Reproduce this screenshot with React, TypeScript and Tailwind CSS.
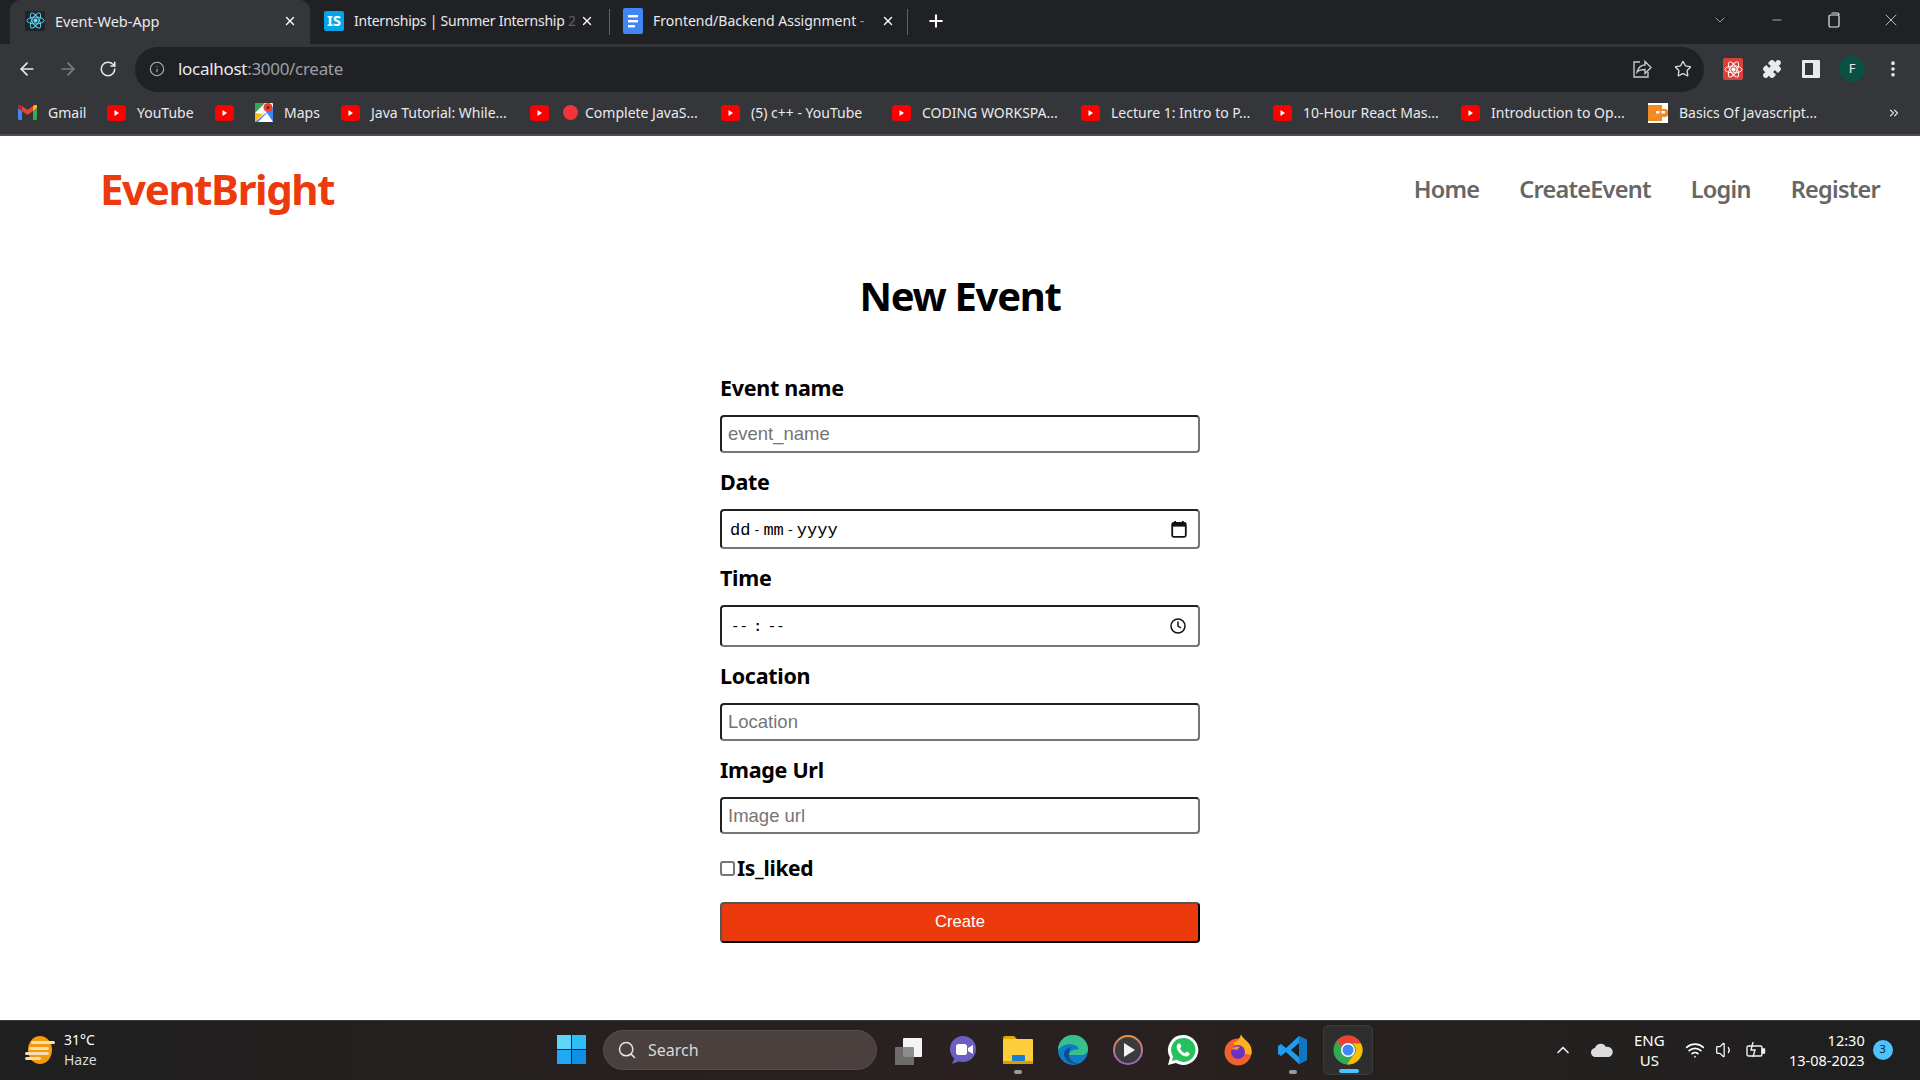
import React from "react";
import { ArrowLeft, ArrowRight, RotateCw, Info, Star, Puzzle, EllipsisVertical, ChevronDown, ChevronUp, Minus, X, Plus, Search, Wifi, Volume1, ChevronsRight } from "lucide-react";

const ui = "font-['Noto_Sans','Open_Sans',sans-serif]";

function Yt() {
  return (
    <svg width="19" height="16" viewBox="0 0 19 16" className="shrink-0">
      <rect x="0" y="0" width="19" height="16" rx="4" fill="#ff0000" />
      <path d="M7.5 5 L12 8 L7.5 11 Z" fill="#fff" />
    </svg>
  );
}
function Gmail() {
  return (
    <svg width="19" height="15" viewBox="0 0 19 15" className="shrink-0">
      <path d="M0 3v10.5A1.5 1.5 0 0 0 1.5 15H4V6z" fill="#4285f4" />
      <path d="M15 6v9h2.5a1.5 1.5 0 0 0 1.5-1.5V3z" fill="#34a853" />
      <path d="M4 6l5.5 4L15 6V1L9.5 5 4 1z" fill="#ea4335" />
      <path d="M0 3l4 3V1L2.5 0A1.5 1.5 0 0 0 0 1.5z" fill="#c5221f" />
      <path d="M15 1v5l4-3V1.5A1.5 1.5 0 0 0 16.5 0z" fill="#fbbc04" />
    </svg>
  );
}
function Maps() {
  return (
    <svg width="18" height="19" viewBox="0 0 18 19" className="shrink-0">
      <rect width="18" height="19" rx="1" fill="#fff" />
      <path d="M0 19V10l8 1-8 8z" fill="#fbbc04" />
      <path d="M0 19L18 4v15z" fill="#4285f4" />
      <path d="M0 0h10L0 10z" fill="#34a853" />
      <path d="M3 19l9-9 6 9z" fill="#fff" />
      <circle cx="13" cy="4.5" r="4.5" fill="#ea4335" />
      <circle cx="13" cy="4.5" r="1.6" fill="#8f1b12" />
    </svg>
  );
}
function Basics() {
  return (
    <svg width="20" height="20" viewBox="0 0 20 20" className="shrink-0">
      <rect width="20" height="20" fill="#fff" />
      <path d="M0 2h14v4H5v8h9v4H0z" fill="#f08a24" />
      <rect x="4" y="6" width="16" height="8" rx="3" fill="#f08a24" />
      <rect x="8" y="8" width="3.5" height="2.5" fill="#fff" />
      <rect x="13.5" y="8" width="3.5" height="2.5" fill="#fff" />
    </svg>
  );
}
function Atom({ size = 20, color = "#61dafb" }: { size?: number; color?: string }) {
  return (
    <svg width={size} height={size} viewBox="0 0 20 20" fill="none" stroke={color} strokeWidth="1">
      <ellipse cx="10" cy="10" rx="9" ry="3.6" />
      <ellipse cx="10" cy="10" rx="9" ry="3.6" transform="rotate(60 10 10)" />
      <ellipse cx="10" cy="10" rx="9" ry="3.6" transform="rotate(120 10 10)" />
      <circle cx="10" cy="10" r="1.8" fill={color} />
    </svg>
  );
}
function Docs() {
  return (
    <svg width="20" height="26" viewBox="0 0 20 26">
      <rect width="20" height="26" rx="2" fill="#4285f4" />
      <rect x="5" y="7" width="10" height="2.4" fill="#fff" />
      <rect x="5" y="12" width="10" height="2.4" fill="#fff" />
      <rect x="5" y="17" width="7" height="2.4" fill="#fff" />
    </svg>
  );
}
function Bookmark({ w, icon, text, tight }: { w: string; icon: React.ReactNode; text?: string; tight?: boolean }) {
  return (
    <div className={`${w} flex items-center ${tight ? "gap-[7px]" : "gap-[11px]"} shrink-0`}>
      {icon}
      {text && <span className="text-[14px] leading-[20px] text-[#e8eaed] whitespace-nowrap">{text}</span>}
    </div>
  );
}

function Field({ label, children }: { label: string; children: React.ReactNode }) {
  return (
    <>
      <label className={`${ui} block h-[28px] leading-[28px] mt-[15px] mb-[13px] text-[21.5px] font-bold text-black tracking-[-0.3px]`}>{label}</label>
      {children}
    </>
  );
}
const box = "w-full border-2 border-[#767676] border-t-[#212121] border-l-[#212121] rounded-[4px] bg-white";
const inp = `${box} block px-[6px] font-['Liberation_Sans',sans-serif] text-[18.5px] placeholder:text-[#757575] outline-none`;

function Calendar() {
  return (
    <svg width="16" height="18" viewBox="0 0 16 18" fill="none">
      <rect x="1.2" y="3" width="13.6" height="13.8" rx="1.5" stroke="#111" strokeWidth="1.8" />
      <rect x="1" y="3" width="14" height="3.6" fill="#111" />
      <rect x="3.2" y="1" width="1.8" height="3" fill="#111" />
      <rect x="11" y="1" width="1.8" height="3" fill="#111" />
    </svg>
  );
}
function Clock() {
  return (
    <svg width="16" height="16" viewBox="0 0 16 16" fill="none" stroke="#111" strokeWidth="1.5">
      <circle cx="8" cy="8" r="7" />
      <path d="M8 3.6V8l3 2" />
    </svg>
  );
}

function Tile({ children, dot, className = "" }: { children: React.ReactNode; dot?: boolean; className?: string }) {
  return (
    <div className={`relative w-[50px] h-[50px] mx-[2.5px] flex items-center justify-center rounded-[5px] ${className}`}>
      {children}
      {dot && <span className="absolute bottom-[1px] left-[21px] w-[8px] h-[4px] rounded-full bg-[#9a9a9a]" />}
    </div>
  );
}

export default function App() {
  return (
    <div className={`${ui} w-[1920px] h-[1080px] overflow-hidden flex flex-col bg-white`}>
      {/* tab strip */}
      <div className="h-[44px] shrink-0 bg-[#202124] flex items-end pl-[10px] text-[#e8eaed]">
        <div className="w-[300px] h-[44px] pb-[3px] bg-[#35363a] rounded-t-[10px] flex items-center pl-[15px] pr-[13px]">
          <div className="w-[20px] h-[20px] bg-[#20232a] rounded-[2px] flex items-center justify-center shrink-0"><Atom size={19} /></div>
          <span className="ml-[10px] text-[14.5px] leading-[20px] flex-1">Event-Web-App</span>
          <X size={14} strokeWidth={2.4} className="text-white" />
        </div>
        <div className="w-[299px] h-[44px] pb-[3px] flex items-center pl-[14px] pr-[15px]">
          <div className="w-[20px] h-[20px] bg-[#00a5ec] rounded-[2px] flex items-center justify-center text-white text-[15px] font-bold shrink-0 leading-none">IS</div>
          <span className="ml-[10px] text-[14px] leading-[20px] whitespace-nowrap tracking-[-0.25px]">Internships | Summer Internship <span className="opacity-30">2</span></span>
          <X size={14} strokeWidth={2.4} className="ml-auto text-white" />
        </div>
        <div className="w-px h-[26px] bg-[#5f6368] mb-[9px]" />
        <div className="w-[297px] h-[44px] pb-[3px] flex items-center pl-[13px] pr-[12px]">
          <Docs />
          <span className="ml-[10px] text-[14px] leading-[20px] whitespace-nowrap">Frontend/Backend Assignment <span className="opacity-60">-</span></span>
          <X size={14} strokeWidth={2.4} className="ml-auto text-white" />
        </div>
        <div className="w-px h-[26px] bg-[#5f6368] mb-[9px]" />
        <Plus size={20} strokeWidth={2.4} className="ml-[18px] mb-[13px] text-white" />
        <div className="ml-auto h-[44px] pb-[5px] flex items-center text-[#dadce0]">
          <ChevronDown size={16} strokeWidth={1} className="mr-[42px]" />
          <Minus size={14} strokeWidth={1.2} className="mr-[43px]" />
          <svg width="14" height="16" viewBox="0 0 14 16" fill="none" stroke="#e8eaed" strokeWidth="1.2" className="mr-[40px]">
            <rect x="2" y="3" width="10" height="12" rx="1.5" />
            <path d="M4.5 1h6a1.5 1.5 0 0 1 1.5 1.5V3" />
          </svg>
          <X size={20} strokeWidth={1} className="mr-[19px]" />
        </div>
      </div>
      {/* toolbar */}
      <div className="h-[50px] shrink-0 bg-[#35363a] flex items-center pl-[17px] text-[#e8eaed]">
        <ArrowLeft size={20} strokeWidth={2} />
        <ArrowRight size={20} strokeWidth={2} className="ml-[21px] text-[#7c7e82]" />
        <RotateCw size={18} strokeWidth={2} className="ml-[21px]" />
        <div className="ml-[18px] w-[1569px] h-[45px] rounded-full bg-[#202124] flex items-center pl-[14px] pr-[12px]">
          <Info size={16} strokeWidth={1.6} className="text-[#b5b7ba]" />
          <span className="ml-[13px] text-[17px] tracking-[-0.3px]">localhost<span className="text-[#9aa0a6]">:3000/create</span></span>
          <svg width="20" height="20" viewBox="0 0 20 20" fill="none" stroke="#c4c7c5" strokeWidth="1.4" className="ml-auto">
            <path d="M8 3H2v15h14v-5" />
            <path d="M5 13c1-5 5-7 8-7V2.500l6 6-6 6V10.500c-3 0-6 .5-8 2.500z" />
          </svg>
          <Star size={18} strokeWidth={1.8} className="ml-[22px] text-[#dadce0]" />
        </div>
        <div className="ml-[19px] w-[20px] h-[22px] bg-[#d8413a] flex items-center justify-center rounded-[2px]"><Atom size={19} color="#ffffff" /></div>
        <Puzzle size={20} fill="#e8eaed" strokeWidth={1.5} className="ml-[19px]" />
        <div className="ml-[20px] w-[18px] h-[18px] border-[3px] border-r-[7px] border-[#e8eaed] rounded-[1px]" />
        <div className="ml-[19px] w-[26px] h-[26px] rounded-full bg-[#0c4f43] flex items-center justify-center text-[13px] text-[#e8eaed]">F</div>
        <EllipsisVertical size={20} strokeWidth={2.4} className="ml-[18px]" />
      </div>
      {/* bookmarks */}
      <div className="h-[42px] shrink-0 bg-[#35363a] border-b-2 border-b-[#4c4d50] pb-[3px] flex items-center pl-[18px]">
        <Bookmark w="w-[89px]" icon={<Gmail />} text="Gmail" />
        <Bookmark w="w-[108px]" icon={<Yt />} text="YouTube" />
        <Bookmark w="w-[40px]" icon={<Yt />} />
        <Bookmark w="w-[86px]" icon={<Maps />} text="Maps" />
        <Bookmark w="w-[189px]" icon={<Yt />} text="Java Tutorial: While..." />
        <Bookmark w="w-[33px]" icon={<Yt />} />
        <Bookmark w="w-[158px]" tight icon={<span className="w-[15px] h-[15px] rounded-full bg-[#f4343a]" />} text="Complete JavaS..." />
        <Bookmark w="w-[171px]" icon={<Yt />} text="(5) c++ - YouTube" />
        <Bookmark w="w-[189px]" icon={<Yt />} text="CODING WORKSPA..." />
        <Bookmark w="w-[192px]" icon={<Yt />} text="Lecture 1: Intro to P..." />
        <Bookmark w="w-[188px]" icon={<Yt />} text="10-Hour React Mas..." />
        <Bookmark w="w-[187px]" icon={<Yt />} text="Introduction to Op..." />
        <Bookmark w="w-[240px]" icon={<Basics />} text="Basics Of Javascript..." />
        <ChevronsRight size={14} className="text-[#e8eaed] -ml-[1px]" />
      </div>
      {/* page */}
      <div className="flex-1 min-h-0 bg-white">
        <nav className="h-[108px] flex items-center pl-[100px] pr-[40px]">
          <h2 className={`${ui} text-[42px] leading-[56px] mb-[3px] font-bold text-[#ec3a0c] tracking-[-1.4px]`}>EventBright</h2>
          <div className="ml-auto flex gap-[40px] text-[23.5px] font-semibold text-[#666666] tracking-[-0.75px]">
            <a>Home</a>
            <a>CreateEvent</a>
            <a>Login</a>
            <a>Register</a>
          </div>
        </nav>
        <h1 className="mt-[22px] h-[60px] leading-[60px] text-center text-[40px] font-bold text-black tracking-[-1.3px]">New Event</h1>
        <form className="w-[480px] mx-auto mt-[48px]">
          <Field label="Event name">
            <input className={`${inp} h-[38px]`} placeholder="event_name" />
          </Field>
          <Field label="Date">
            <div className={`${box} h-[40px] flex items-center pl-[8px] pr-[11px] font-['Liberation_Mono',monospace] text-[17px] text-black`}>
              <span className="flex items-center pt-[3px]"><span>dd</span><span className="w-[13px] text-center text-[13px]">-</span><span>mm</span><span className="w-[13px] text-center text-[13px]">-</span><span>yyyy</span></span>
              <span className="ml-auto flex"><Calendar /></span>
            </div>
          </Field>
          <Field label="Time">
            <div className={`${box} h-[42px] flex items-center pl-[9px] pr-[12px] font-['Liberation_Mono',monospace] text-[14px] text-black`}>
              <span className="flex items-center pt-[2px]"><span>--</span><span className="w-[20px] text-center font-bold">:</span><span>--</span></span>
              <span className="ml-auto flex"><Clock /></span>
            </div>
          </Field>
          <Field label="Location">
            <input className={`${inp} h-[38px]`} placeholder="Location" />
          </Field>
          <Field label="Image Url">
            <input className={`${inp} h-[37px]`} placeholder="Image url" />
          </Field>
          <div className="mt-[20px] h-[30px] flex items-center">
            <input type="checkbox" className="w-[15px] h-[15px] mb-[2px] appearance-none border-2 border-[#767676] rounded-[3px] bg-white" />
            <span className="ml-[2px] text-[21px] font-bold text-black tracking-[-0.3px]">Is_liked</span>
          </div>
          <button type="button" className="block mt-[18px] w-full h-[41px] bg-[#ec3a0c] text-white font-['Liberation_Sans',sans-serif] text-[16.6px] border-2 border-[#555555] border-r-black border-b-black rounded-[4px]">Create</button>
        </form>
      </div>
      {/* taskbar */}
      <div className="h-[60px] shrink-0 border-t border-t-[#3a3a3a] pb-[2px] bg-linear-to-r from-[#1f1f1f] via-[#2a2120] to-[#1f1f1f] flex items-center text-white">
        <div className="w-[557px] shrink-0 flex items-center pl-[25px]">
          <svg width="30" height="28" viewBox="0 0 30 28">
            <ellipse cx="15" cy="14" rx="12" ry="14" fill="#f59a0b" />
            <rect x="6" y="5" width="24" height="3" rx="1.5" fill="#f3dfb3" />
            <rect x="4" y="11" width="20" height="3" rx="1.5" fill="#f3dfb3" />
            <rect x="0" y="16" width="24" height="3" rx="1.5" fill="#f3dfb3" />
            <rect x="0" y="21" width="16" height="3" rx="1.5" fill="#f3dfb3" />
          </svg>
          <div className="ml-[9px] text-[14px] leading-[20px]">
            <div>31°C</div>
            <div className="text-[#d8d8d8]">Haze</div>
          </div>
        </div>
        <svg width="29" height="29" viewBox="0 0 29 29" className="shrink-0">
          <rect width="14" height="14" fill="#5fd5fb" />
          <rect x="15" width="14" height="14" fill="#2fbcf7" />
          <rect y="15" width="14" height="14" fill="#1ea9f2" />
          <rect x="15" y="15" width="14" height="14" fill="#0f8fe6" />
        </svg>
        <div className="ml-[17px] w-[274px] h-[40px] rounded-full bg-[#4a403e] flex items-center pl-[13px] shrink-0 border border-[#55504e]">
          <Search size={20} strokeWidth={1.8} className="text-[#e6e6e6]" />
          <span className="ml-[11px] text-[16px] text-[#d9d9d9]">Search</span>
        </div>
        <div className="ml-[3px] flex items-center">
          <Tile>
            <svg width="30" height="30" viewBox="0 0 30 30" className="ml-[-2px]">
              <rect x="11" y="3" width="19" height="19" rx="1" fill="#f4f4f4" />
              <rect x="3" y="12" width="19" height="19" rx="1" fill="#7a7a7a" fillOpacity="0.85" />
            </svg>
          </Tile>
          <Tile>
            <svg width="30" height="30" viewBox="0 0 30 30">
              <circle cx="15" cy="14" r="13" fill="#6b5fc4" />
              <path d="M6 24l-2 5 8-3z" fill="#6b5fc4" />
              <rect x="8" y="9" width="11" height="11" rx="2.5" fill="#fff" />
              <path d="M20 13l5-3v9l-5-3z" fill="#fff" />
            </svg>
          </Tile>
          <Tile dot>
            <svg width="32" height="30" viewBox="0 0 32 30">
              <path d="M1 3a2 2 0 0 1 2-2h9l3 3H1z" fill="#e0a800" />
              <rect x="1" y="4" width="30" height="25" rx="1" fill="#ffce3d" />
              <rect x="1" y="26" width="30" height="3" fill="#d69e00" />
              <rect x="10" y="20" width="13" height="6" rx="1" fill="#1680d4" />
            </svg>
          </Tile>
          <Tile>
            <svg width="32" height="32" viewBox="0 0 32 32">
              <circle cx="16" cy="16" r="15" fill="#0f7cc4" />
              <path d="M1 16C1 7 8 1 16 1c8 0 15 6 15 14 0 4-3 6-7 6H12c0-6 7-5 10-6C20 9 7 8 1 16z" fill="#36c08d" />
              <path d="M12 21c0 5 5 10 13 8-6 2-17 1-18-9 0-3 3-6 7-7-2 2-2 5-2 8z" fill="#0b4f8a" />
            </svg>
          </Tile>
          <Tile>
            <svg width="30" height="30" viewBox="0 0 30 30">
              <defs><linearGradient id="ring" x1="0" y1="0" x2="0" y2="1"><stop offset="0" stopColor="#e8914a" /><stop offset="1" stopColor="#9263c9" /></linearGradient></defs>
              <circle cx="15" cy="15" r="14" fill="#3b3b3b" stroke="url(#ring)" strokeWidth="2" />
              <path d="M11 8l11 7-11 7z" fill="#f2f2f2" />
            </svg>
          </Tile>
          <Tile>
            <svg width="32" height="32" viewBox="0 0 32 32">
              <path d="M16 1a15 15 0 0 0-13 22.5L1 31l7.8-2A15 15 0 1 0 16 1z" fill="#fff" />
              <path d="M16 4a12 12 0 0 0-10 18.4L5 27l4.6-1.2A12 12 0 1 0 16 4z" fill="#25c15e" />
              <path d="M11.5 9.5c-1 .5-2 2-1.8 4 .4 3.5 5 8.5 9 9 2 .2 3.5-1 4-2.2l-.2-1.3-3-1.5-1.5 1.7c-2-.7-4-2.6-5-5l1.4-1.6-1.3-3z" fill="#fff" />
            </svg>
          </Tile>
          <Tile>
            <svg width="30" height="32" viewBox="0 0 30 32">
              <circle cx="15" cy="18" r="13.5" fill="#f2612d" />
              <path d="M18 0c1 4 6 6 9 11 2 4 2 7 1 10L15 18 10 8c3 1 7-3 8-8z" fill="#ffb01f" />
              <circle cx="15" cy="18" r="7" fill="#6b33c4" />
              <path d="M8 15c2-2 6-3 9-2l-3 3z" fill="#ff8a30" />
            </svg>
          </Tile>
          <Tile dot>
            <svg width="30" height="30" viewBox="0 0 30 30">
              <path d="M21 1l8 4v20l-8 4L8 17l-5 4-3-2v-8l3-2 5 4z" fill="#1f9cf0" />
              <path d="M21 8l-8 7 8 7z" fill="#1f1f1f" />
              <path d="M21 1l8 4v20l-8 4z" fill="#0e78c4" />
            </svg>
          </Tile>
          <Tile className="bg-[#2e2e2e] border border-[#3b3b3b]">
            <svg width="30" height="30" viewBox="0 0 30 30">
              <circle cx="15" cy="15" r="14.5" fill="#34a853" />
              <path d="M15 .5a14.5 14.5 0 0 1 13 8H15a6.5 6.5 0 0 0-6 4L3.8 5.8A14.5 14.5 0 0 1 15 .5z" fill="#ea4335" />
              <path d="M28 8.500A14.500 14.500 0 0 1 14 29.500l6-9a7 7 0 0 0-1-12z" fill="#fbbc04" />
              <circle cx="15" cy="15" r="7" fill="#fff" />
              <circle cx="15" cy="15" r="5.500" fill="#4285f4" />
            </svg>
            <span className="absolute bottom-[1px] left-[15px] w-[20px] h-[4px] rounded-full bg-[#4cc2ff]" />
          </Tile>
        </div>
        <ChevronUp size={20} strokeWidth={2} className="ml-[178px] text-[#f0f0f0]" />
        <svg width="22" height="14" viewBox="0 0 22 14" className="ml-[18px]">
          <path d="M5 14a4.500 4.500 0 0 1-1-9 6 6 0 0 1 11-1 5 5 0 0 1 3 10z" fill="#dcdcdc" />
        </svg>
        <div className="ml-[21px] text-[15px] leading-[20px] text-center"><div>ENG</div><div>US</div></div>
        <Wifi size={20} strokeWidth={2} className="ml-[20px]" />
        <Volume1 size={20} strokeWidth={1.5} className="ml-[10px]" />
        <svg width="20" height="16" viewBox="0 0 20 16" fill="none" stroke="#f0f0f0" strokeWidth="1.4" className="ml-[11px]">
          <rect x="1" y="4" width="15" height="10" rx="1.500" />
          <rect x="16" y="7" width="2.500" height="4" fill="#f0f0f0" />
          <path d="M7 0L5 8h4l-2 7" />
        </svg>
        <div className="ml-[15px] w-[84px] shrink-0 text-right text-[14.500px] leading-[20px] whitespace-nowrap"><div>12:30</div><div>13-08-2023</div></div>
        <div className="ml-[8px] w-[20px] h-[20px] rounded-full bg-[#4cc2ff] flex items-center justify-center text-[11px] text-[#10202a]">3</div>
      </div>
    </div>
  );
}
